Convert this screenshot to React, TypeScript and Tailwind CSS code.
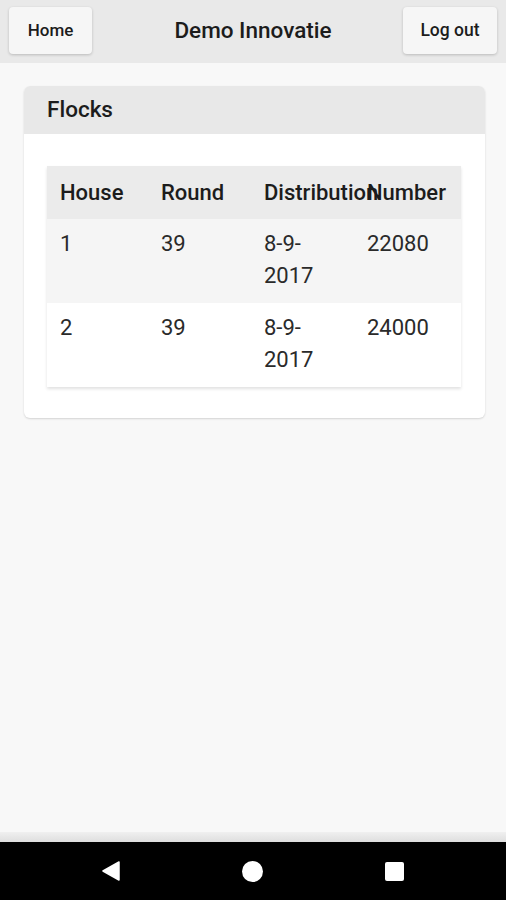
const ROWS = [
  { house: "1", round: "39", number: "22080" },
  { house: "2", round: "39", number: "24000" },
];

const COLS = [
  { label: "House", w: "w-[101px]" },
  { label: "Round", w: "w-[103px]" },
  { label: "Distribution", w: "w-[103px]" },
  { label: "Number", w: "w-[107px]" },
];

function NavBar() {
  return (
    <div className="flex h-[58px] shrink-0 items-center justify-center bg-black">
      <div className="flex w-full items-center justify-between px-[102px]">
        <svg width="18" height="20" viewBox="0 0 18 20">
          <path d="M17 1 L1 10 L17 19 Z" fill="white" stroke="white" strokeLinejoin="round" strokeWidth="1.5" />
        </svg>
        <div className="h-[21px] w-[21px] rounded-full bg-white" />
        <div className="h-[19px] w-[19px] rounded-[2px] bg-white" />
      </div>
    </div>
  );
}

export default function App() {
  return (
    <div
      className="flex h-[900px] w-[506px] flex-col bg-[#f8f8f8] text-[#1c1c1c]"
      style={{ fontFamily: "Roboto, 'Noto Sans', sans-serif" }}
    >
      <header className="grid h-[63px] shrink-0 grid-cols-[1fr_auto_1fr] items-center bg-[#e9e9e9] px-[9px] pb-[2px]">
        <button className="h-[47px] w-[83px] rounded-[4px] bg-[#f6f6f6] text-[17px] font-medium shadow-[0_1px_3px_rgba(0,0,0,0.2)]">
          Home
        </button>
        <div className="text-[22.5px] font-medium">Demo Innovatie</div>
        <button className="h-[47px] w-[94px] justify-self-end rounded-[4px] bg-[#f6f6f6] text-[17.5px] font-medium shadow-[0_1px_3px_rgba(0,0,0,0.2)]">
          Log out
        </button>
      </header>

      <main className="flex-1 px-[24px] pt-[23px]">
        <div className="w-[461px] overflow-hidden rounded-[6px] bg-white shadow-[0_1px_2px_rgba(0,0,0,0.15)]">
          <div className="flex h-[48px] items-center bg-[#e8e8e8] px-[23px] text-[22.5px] font-medium">Flocks</div>
          <div className="px-[23px] pb-[31px] pt-[32px]">
            <table className="w-[414px] table-fixed border-collapse text-[22px] shadow-[0_2px_3px_rgba(0,0,0,0.12)]">
              <thead>
                <tr className="bg-[#ebebeb]">
                  {COLS.map((c) => (
                    <th key={c.label} className={`${c.w} h-[53px] px-[13px] text-left font-medium leading-[32px]`}>
                      {c.label}
                    </th>
                  ))}
                </tr>
              </thead>
              <tbody className="text-[#2a2a2a]">
                {ROWS.map((r, i) => (
                  <tr key={r.house} className={i % 2 === 0 ? "bg-[#f5f5f5]" : "bg-white"}>
                    <td className="px-[13px] pb-[11px] pt-[9px] align-top leading-[32px]">{r.house}</td>
                    <td className="px-[13px] pb-[11px] pt-[9px] align-top leading-[32px]">{r.round}</td>
                    <td className="px-[13px] pb-[11px] pt-[9px] align-top leading-[32px]">
                      8-9-
                      <br />
                      2017
                    </td>
                    <td className="px-[13px] pb-[11px] pt-[9px] align-top leading-[32px]">{r.number}</td>
                  </tr>
                ))}
              </tbody>
            </table>
          </div>
        </div>
      </main>

      <div className="h-[10px] shrink-0 bg-gradient-to-b from-[#f0f0f0] to-[#dedede]" />
      <NavBar />
    </div>
  );
}
